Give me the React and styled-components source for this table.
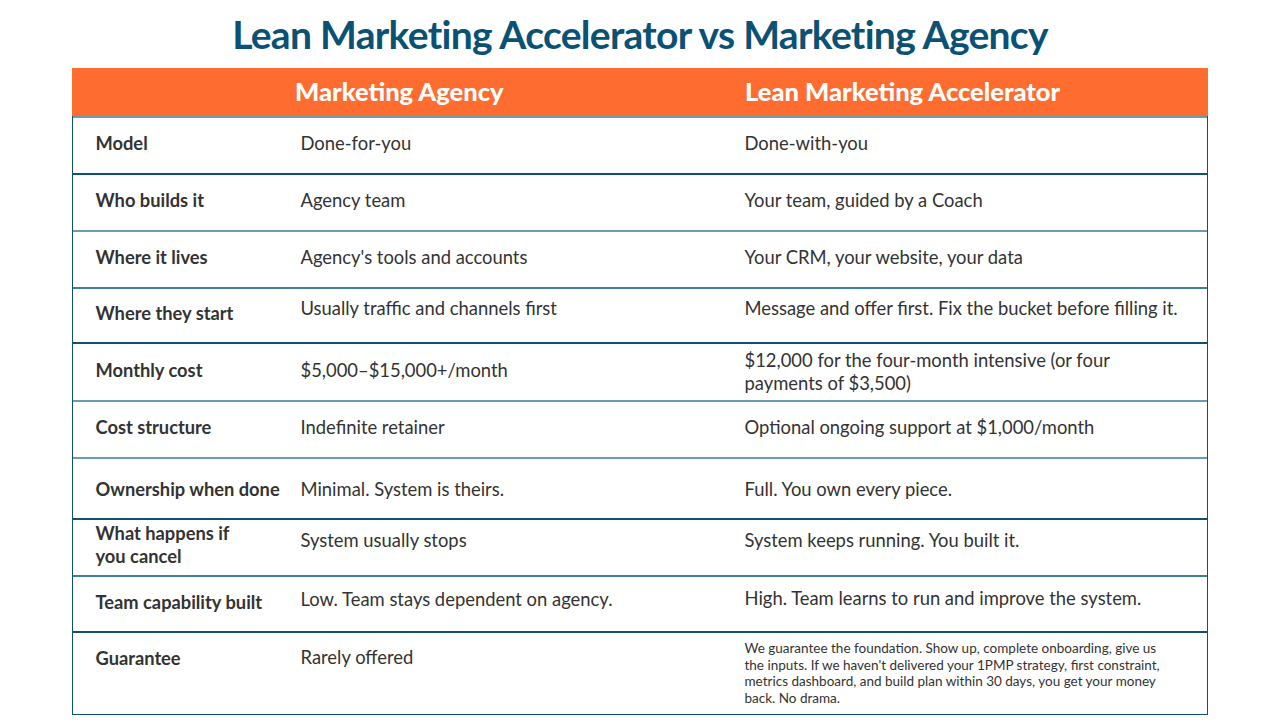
import React from "react";
import styled, { createGlobalStyle } from "styled-components";

const Global = createGlobalStyle`
  html, body { margin: 0; padding: 0; background: #ffffff; }
  body { font-family: "Lato", "Noto Sans", sans-serif; }
`;

const Page = styled.div`
  width: 1280px;
  height: 720px;
  overflow: hidden;
  display: flex;
  flex-direction: column;
  align-items: center;
  background: #fff;
`;

const Title = styled.h1`
  margin: 0;
  height: 68px;
  display: flex;
  align-items: center;
  justify-content: center;
  font-family: "Lato", sans-serif;
  font-weight: 700;
  font-size: 39px;
  letter-spacing: -0.7px;
  color: #0b5173;
  line-height: 1;
`;

const Table = styled.div`
  width: 1136px;
  display: flex;
  flex-direction: column;
`;

const Head = styled.div`
  height: 48px;
  background: #ff6c2f;
  display: grid;
  grid-template-columns: 223px 450px 1fr;
  align-items: center;
`;

const HeadCell = styled.div`
  font-family: "Lato", sans-serif;
  font-weight: 900;
  font-size: 25.5px;
  color: #ffffff;
  padding-bottom: 3px;
`;

const Body = styled.div`
  border-left: 1.5px solid #0e5273;
  border-right: 1.5px solid #0e5273;
  border-bottom: 1.5px solid #0e5273;
  display: flex;
  flex-direction: column;
`;

const Row = styled.div`
  box-sizing: border-box;
  height: ${(p) => p.$h}px;
  border-top: 2px solid ${(p) => p.$line};
  display: grid;
  grid-template-columns: 205px 444px 1fr;
  padding-left: 22.5px;
  align-items: ${(p) => (p.$top ? "start" : "center")};
  padding-top: ${(p) => (p.$top ? "13px" : "0")};
  padding-bottom: ${(p) => (p.$top ? "0" : "4px")};
`;

const Label = styled.div`
  font-weight: 700;
  font-size: 18.3px;
  line-height: 23px;
  color: #333333;
  margin-top: ${(p) => p.$shift || 0}px;
  white-space: nowrap;
`;

const Cell = styled.div`
  font-weight: 400;
  font-size: 18.4px;
  line-height: 23px;
  color: #333333;
  margin-top: ${(p) => p.$shift || 0}px;
  padding-right: 20px;
`;

const Small = styled.div`
  font-weight: 400;
  font-size: 13.5px;
  line-height: 16.7px;
  color: #333333;
  padding-right: 34px;
  margin-top: -6px;
`;

const DARK = "#0e5273";
const LIGHT = "#6d9bb1";
const MID = "#3f7f9c";

const rows = [
  { h: 57, line: LIGHT, label: "Model", a: "Done-for-you", b: "Done-with-you" },
  { h: 57, line: DARK, label: "Who builds it", a: "Agency team", b: "Your team, guided by a Coach" },
  { h: 57, line: LIGHT, label: "Where it lives", a: "Agency's tools and accounts", b: "Your CRM, your website, your data" },
  { h: 55, line: MID, label: "Where they start", a: "Usually traffic and channels first", b: "Message and offer first. Fix the bucket before filling it.", as: -10, bs: -11 },
  { h: 58, line: DARK, label: "Monthly cost", a: "$5,000–$15,000+/month", b: "$12,000 for the four-month intensive (or four payments of $3,500)", bs: 3 },
  { h: 57, line: LIGHT, label: "Cost structure", a: "Indefinite retainer", b: "Optional ongoing support at $1,000/month" },
  { h: 61, line: LIGHT, label: "Ownership when done", a: "Minimal. System is theirs.", b: "Full. You own every piece.", ls: 6, as: 6, bs: 6 },
  { h: 57, line: DARK, label: ["What happens if", "you cancel"], a: "System usually stops", b: "System keeps running. You built it.", ls: -1, as: -11, bs: -11 },
  { h: 56, line: MID, label: "Team capability built", a: "Low. Team stays dependent on agency.", b: "High. Team learns to run and improve the system.", as: -5, bs: -8 },
];

export default function App() {
  return (
    <Page>
      <Global />
      <Title>Lean Marketing Accelerator vs Marketing Agency</Title>
      <Table>
        <Head>
          <span />
          <HeadCell>Marketing Agency</HeadCell>
          <HeadCell>Lean Marketing Accelerator</HeadCell>
        </Head>
        <Body>
          {rows.map((r, i) => (
            <Row key={i} $h={r.h} $line={r.line}>
              <Label $shift={r.ls}>
                {Array.isArray(r.label) ? (
                  <>
                    {r.label[0]}
                    <br />
                    {r.label[1]}
                  </>
                ) : (
                  r.label
                )}
              </Label>
              <Cell $shift={r.as}>{r.a}</Cell>
              <Cell $shift={r.bs}>{r.b}</Cell>
            </Row>
          ))}
          <Row $h={83} $line={DARK} $top>
            <Label $shift={1}>Guarantee</Label>
            <Cell>Rarely offered</Cell>
            <Small>
              We guarantee the foundation. Show up, complete onboarding, give us the inputs. If we haven't
              delivered your 1PMP strategy, first constraint, metrics dashboard, and build plan within 30
              days, you get your money back. No drama.
            </Small>
          </Row>
        </Body>
      </Table>
    </Page>
  );
}
